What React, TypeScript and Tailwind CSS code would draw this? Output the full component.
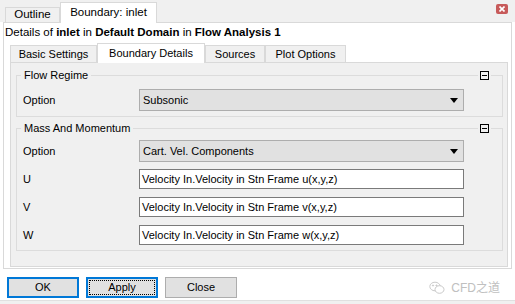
import React from "react";

function CollapseIcon() {
  return (
    <span className="flex items-center bg-[#f0f0f0] px-[2px]">
      <span className="flex h-[9px] w-[9px] items-center justify-center border border-black">
        <span className="h-px w-[5px] bg-black" />
      </span>
    </span>
  );
}

function GroupBox({
  title,
  className,
  children,
}: {
  title: string;
  className?: string;
  children: React.ReactNode;
}) {
  return (
    <div className={"relative ml-[5px] w-[487px] border border-[#dcdcdc] " + (className ?? "")}>
      <span className="absolute -top-[8px] left-[4px] bg-[#f0f0f0] px-[3px] leading-[14px]">
        {title}
      </span>
      <span className="absolute -top-[5px] right-[11px]">
        <CollapseIcon />
      </span>
      {children}
    </div>
  );
}

function Row({ label, children }: { label: string; children: React.ReactNode }) {
  return (
    <div className="flex items-center pl-[6px]">
      <span className="w-[116px]">{label}</span>
      {children}
    </div>
  );
}

function Select({ value }: { value: string }) {
  return (
    <div className="flex h-[22px] w-[325px] items-center justify-between border border-[#adadad] bg-[#e1e1e1] pl-[3px] pr-[5px]">
      <span>{value}</span>
      <svg width="8" height="5" viewBox="0 0 8 5">
        <path d="M0 0H8L4 5Z" fill="#000" />
      </svg>
    </div>
  );
}

function TextBox({ value }: { value: string }) {
  return (
    <div className="flex h-[20px] w-[325px] items-center border border-[#7a7a7a] bg-white pl-[2px]">
      {value}
    </div>
  );
}

export default function App() {
  const inner = [
    { name: "Basic Settings", w: "w-[87px]", active: false },
    { name: "Boundary Details", w: "w-[108px]", active: true },
    { name: "Sources", w: "w-[60px]", active: false },
    { name: "Plot Options", w: "w-[81px]", active: false },
  ];

  return (
    <div className="flex h-[304px] w-[515px] flex-col overflow-hidden bg-white font-['Liberation_Sans',Arial,sans-serif] text-[11px] text-black">
      {/* top tab strip */}
      <div className="flex h-[22px] shrink-0 items-end bg-[#f0f0f0] pl-[5px]">
        <div className="flex h-[15px] w-[55px] items-center justify-center border border-b-0 border-[#d9d9d9] bg-[#f0f0f0] text-[11.5px]">
          Outline
        </div>
        <div className="relative z-10 -mb-px flex h-[21px] w-[97px] items-center justify-center border border-b-0 border-[#d9d9d9] bg-white text-[11.5px]">
          Boundary: inlet
        </div>
        <div className="mb-[4px] ml-auto mr-[7px] flex h-[10px] w-[12px] items-center justify-center self-center rounded-[2px] bg-[#c75a5a]">
          <svg width="6" height="6" viewBox="0 0 6 6">
            <path d="M0.5 0.5L5.5 5.5M5.5 0.5L0.5 5.5" stroke="#fff" strokeWidth="1.6" />
          </svg>
        </div>
      </div>

      {/* body */}
      <div className="mx-[3px] flex h-[247px] shrink-0 flex-col border border-[#d9d9d9] bg-white">
        <div className="flex h-[20px] items-center pl-px text-[11.5px]">
          <span>
            Details of <b>inlet</b> in <b>Default Domain</b> in <b>Flow Analysis 1</b>
          </span>
        </div>

        <div className="flex h-[19px] items-end pl-[6px]">
          {inner.map((t) =>
            t.active ? (
              <div
                key={t.name}
                className={"relative z-10 -mb-px flex h-[20px] items-center justify-center border border-b-0 border-[#d9d9d9] bg-white " + t.w}
              >
                {t.name}
              </div>
            ) : (
              <div
                key={t.name}
                className={"flex h-[17px] items-center justify-center border border-b-0 border-[#d9d9d9] bg-[#f0f0f0] " + t.w}
              >
                {t.name}
              </div>
            )
          )}
        </div>

        <div className="ml-[6px] h-[205px] w-[498px] border border-[#d9d9d9] bg-[#f0f0f0]">
          <GroupBox title="Flow Regime" className="mt-[12px] h-[42px] pt-[13px]">
            <Row label="Option">
              <Select value="Subsonic" />
            </Row>
          </GroupBox>

          <GroupBox title="Mass And Momentum" className="mt-[11px] h-[123px] pt-[11px]">
            <div className="flex flex-col gap-[7px]">
              <Row label="Option">
                <Select value="Cart. Vel. Components" />
              </Row>
              <div className="flex flex-col gap-[8px]">
                <Row label="U">
                  <TextBox value="Velocity In.Velocity in Stn Frame u(x,y,z)" />
                </Row>
                <Row label="V">
                  <TextBox value="Velocity In.Velocity in Stn Frame v(x,y,z)" />
                </Row>
                <Row label="W">
                  <TextBox value="Velocity In.Velocity in Stn Frame w(x,y,z)" />
                </Row>
              </div>
            </div>
          </GroupBox>
        </div>
      </div>

      {/* buttons */}
      <div className="mt-[8px] flex h-[21px] shrink-0 items-center gap-[7px] pl-[7px]">
        <button className="flex h-[21px] w-[72px] items-center justify-center border-2 border-[#0078d7] bg-[#e1e1e1]">
          OK
        </button>
        <button className="flex h-[21px] w-[72px] items-center justify-center border-2 border-[#0078d7] bg-[#e1e1e1] p-px">
          <span className="flex h-full w-full items-center justify-center border border-dotted border-black">
            Apply
          </span>
        </button>
        <button className="flex h-[21px] w-[72px] items-center justify-center border border-[#adadad] bg-[#e1e1e1]">
          Close
        </button>
        <div className="ml-auto mr-[15px] flex items-center gap-[6px] text-[#c0c0c0]">
          <svg width="16" height="14" viewBox="0 0 16 14" fill="none" stroke="#cacaca" strokeWidth="1">
            <ellipse cx="6" cy="5.5" rx="5.2" ry="4.3" />
            <ellipse cx="10.5" cy="8.5" rx="4.5" ry="3.8" fill="#fff" />
            <circle cx="4" cy="4.5" r="0.6" fill="#cacaca" />
            <circle cx="7.5" cy="4.5" r="0.6" fill="#cacaca" />
          </svg>
          <span className="font-['Liberation_Sans','Noto_Sans_CJK_SC',sans-serif] text-[12px]">CFD之道</span>
        </div>
      </div>

      <div className="mt-[2px] flex-1 border-t border-[#e0e0e0] bg-[#f0f0f0]" />
    </div>
  );
}
